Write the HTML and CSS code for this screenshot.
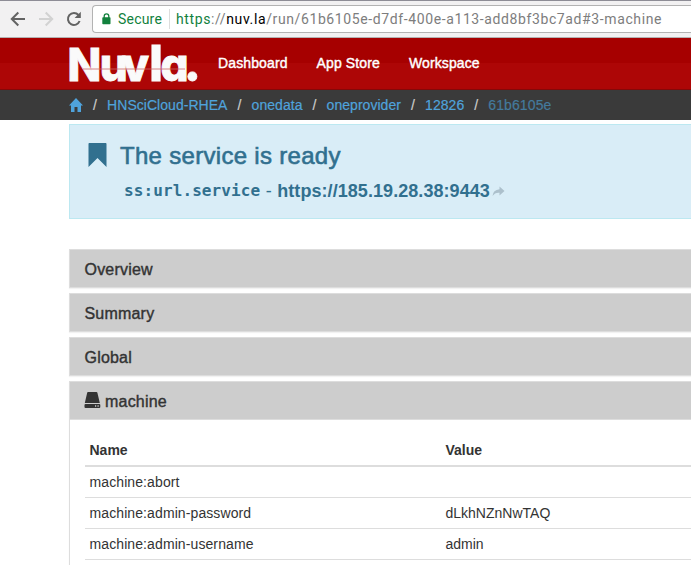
FILE: index.html
```html
<!DOCTYPE html>
<html lang="en">
<head>
<meta charset="utf-8">
<title>Nuvla</title>
<link rel="stylesheet" href="styles.css">
</head>
<body>
<div class="browser">
  <svg class="nav-icons" width="92" height="37" viewBox="0 0 92 37" fill="none" stroke-width="2">
    <path d="M25 18H12M18.300 11.500L11.800 18L18.300 24.500" stroke="#636363"/>
    <path d="M39 18H52M45.700 11.500L52.200 18L45.700 24.500" stroke="#d2d2d2"/>
    <path d="M78.500 14A6 6 0 1 0 79.600 20" stroke="#636363"/>
    <path d="M80.800 10.800V17H74.600Z" fill="#636363"/>
  </svg>
  <div class="address">
    <svg class="lock" width="9" height="12" viewBox="0 0 9 12"><path d="M2.200 5V3.200a2.300 2.300 0 0 1 4.600 0V5" fill="none" stroke="#12813d" stroke-width="1.300"/><rect x="0.300" y="4.300" width="8.200" height="7" rx="0.800" fill="#12813d"/></svg>
    <span class="secure">Secure</span>
    <span class="url"><span class="scheme">https</span>://<span class="host">nuv.la</span>/run/61b6105e-d7df-400e-a113-add8bf3bc7ad#3-machine</span>
  </div>
</div>
<header class="navbar">
  <svg class="logo" width="130" height="51" viewBox="0 0 130 51">
    <text class="logo-text" transform="scale(.98 1)" x="-1.500 31.500 54 82 93.500 117" y="43">Nuv<tspan class="tall">l</tspan>a<tspan class="dot">.</tspan></text>
    <path class="logo-line" d="M14 31H116"/>
  </svg>
  <nav class="menu"><a>Dashboard</a><a>App Store</a><a>Workspace</a></nav>
</header>
<div class="crumbs">
  <svg class="home" width="14" height="14" viewBox="0 0 14 14"><path d="M7 0L14 7.600H12V14H8.500V9H5.500V14H2V7.600H0Z" fill="#4fa3dc"/></svg>
  <i>/</i><a>HNSciCloud-RHEA</a><i>/</i><a>onedata</a><i>/</i><a>oneprovider</a><i>/</i><a>12826</a><i>/</i><a class="current">61b6105e</a>
</div>
<main>
  <section class="alert">
    <svg class="bookmark" width="19" height="24" viewBox="0 0 19 24"><path d="M1.200 0H17.800Q18.500 0 18.500 1V24L9.500 15L0.500 24V1Q0.500 0 1.200 0Z" fill="#31708f"/></svg>
    <div>
      <h1>The service is ready</h1>
      <p><code>ss:url.service</code><span class="dash-sep">-</span><strong>https://185.19.28.38:9443</strong><svg class="share" width="13" height="11" viewBox="0 0 13 11"><path d="M7.500 0.500L12.500 5L7.500 9.500V6.700Q3 6.200 0.500 10Q1 3.800 7.500 3.200Z" fill="#acc0cc"/></svg></p>
    </div>
  </section>
  <section class="panel"><h2>Overview</h2></section>
  <section class="panel"><h2>Summary</h2></section>
  <section class="panel"><h2>Global</h2></section>
  <section class="panel">
    <h2><svg class="disk" width="17" height="17" viewBox="0 0 17 17"><path d="M4 0H12.500Q13.200 0 13.400 0.800L15.800 11H0.800L3.200 0.800Q3.300 0 4 0ZM1.500 12H15.300Q16.300 12 16.300 13V15Q16.300 16 15.300 16H1.500Q0.500 16 0.500 15V13Q0.500 12 1.500 12Z" fill="#333"/><path d="M11 13.300h1.200v1.400H11zM13.500 13.300h1.200v1.400h-1.200z" fill="#cdcdcd"/></svg><span>machine</span></h2>
    <div class="body">
      <table>
        <thead><tr><th>Name</th><th>Value</th></tr></thead>
        <tbody>
          <tr><td>machine:abort</td><td></td></tr>
          <tr><td>machine:admin-password</td><td>dLkhNZnNwTAQ</td></tr>
          <tr><td>machine:admin-username</td><td>admin</td></tr>
        </tbody>
      </table>
    </div>
  </section>
</main>
</body>
</html>
```
FILE: styles.css
```css
* { box-sizing: border-box; }
body { margin: 0; background: #fff; color: #333; font: 14px/20px "Liberation Sans", Arial, sans-serif; }
svg { display: block; flex: none; }
.browser { display: flex; height: 38px; background: #f2f1f2; border-top: 1px solid #8e8d96; border-bottom: 1px solid #b5b1b1; }
.address { flex: 1; display: flex; align-items: center; height: 28px; margin-top: 4px; padding-left: 9px; background: #fff; border: 1px solid #b3b3b3; border-right: 0; border-radius: 4px 0 0 4px; font: 14px/26px Roboto, sans-serif; white-space: nowrap; }
.secure { margin-left: 7px; width: 51px; color: #12813d; letter-spacing: .2px; }
.url { padding-left: 6px; border-left: 1px solid #ddd; line-height: 20px; color: #7d7d7d; letter-spacing: .61px; }
.scheme { color: #12813d; }
.host { color: #000; }
.navbar { display: flex; height: 52px; padding-left: 69px; background: linear-gradient(#a60000 0 50%, #ad0606 50%); border-bottom: 1px solid #850808; }
.logo { overflow: visible; }
.logo-text { font: 800 45px Inter, sans-serif; font-feature-settings: "cv11"; fill: #fafafa; stroke: #fafafa; stroke-width: .8px; }
.tall { font-size: 49px; }
.dot { font-size: 50px; }
.logo-line { stroke: #c66; stroke-width: .8; }
.menu { display: flex; gap: 29px; margin-left: 19px; line-height: 51px; color: #fff; letter-spacing: .12px; -webkit-text-stroke: .4px #fff; }
.crumbs { display: flex; align-items: center; height: 30px; padding-left: 69px; background: #3a3a3a; color: #4fa3dc; letter-spacing: .04px; -webkit-text-stroke: .2px; }
.crumbs i { width: 24.100px; text-align: center; font-style: normal; color: #ccc; }
.crumbs .current { color: #447a9d; letter-spacing: .1px; }
main { margin: 4px 0 0 69px; }
.alert { display: flex; height: 95px; margin-bottom: 30px; padding: 18px 0 0 18px; background: #d9edf7; border: 1px solid #bce8f1; border-right: 0; color: #31708f; }
h1 { margin: 0 0 0 13px; font-size: 24px; line-height: 26px; font-weight: 400; letter-spacing: .3px; -webkit-text-stroke: .6px; }
.alert p { display: flex; align-items: center; margin: 12px 0 0 17px; line-height: 20px; font-size: 18px; white-space: nowrap; }
code { font: bold 16px/20px "DejaVu Sans Mono", monospace; letter-spacing: .1px; }
strong { letter-spacing: .06px; }
.dash-sep { width: 17px; text-align: center; }
.share { margin-left: 2px; }
.panel { height: 39px; margin-bottom: 5px; border: 1px solid #ddd; border-right: 0; box-shadow: 0 1px 1px rgba(0,0,0,.05); }
.panel:last-child { height: 184px; margin-bottom: 0; border-bottom: 0; }
h2 { display: flex; align-items: center; height: 37px; margin: 0; padding: 2px 0 0 14.500px; background: #cdcdcd; font-size: 16px; font-weight: 400; letter-spacing: .2px; -webkit-text-stroke: .4px; }
.disk { margin: -3px 4px 0 -.5px; }
.body { padding: 15px 0 0 15px; border-top: 1px solid #ddd; }
table { width: 100%; border-collapse: separate; border-spacing: 0; table-layout: fixed; }
th, td { height: 31px; padding: 5px 5px 5px 4.500px; text-align: left; border-bottom: 1px solid #ddd; }
td:first-child { letter-spacing: .1px; }
th { height: 32px; border-bottom-width: 2px; }
th:first-child { width: 356px; }
```
